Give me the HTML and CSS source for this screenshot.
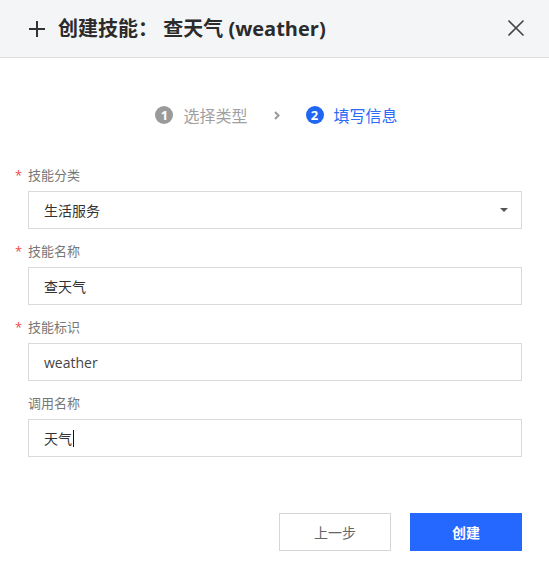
FILE: index.html
```html
<!DOCTYPE html>
<html lang="zh">
<head>
<meta charset="utf-8">
<title>创建技能</title>
<link rel="stylesheet" href="styles.css">
</head>
<body>
<div class="dialog">
  <header class="head">
    <div class="title">
      <svg class="plus" width="18" height="18" viewBox="0 0 18 18"><path d="M9 1v16M1 9h16" stroke="#333" stroke-width="2" fill="none"/></svg>
      <span class="title-text">创建技能： 查天气 (weather)</span>
    </div>
    <svg class="close" width="18" height="18" viewBox="0 0 18 18"><path d="M1.5 1.5l15 15M16.5 1.5l-15 15" stroke="#444" stroke-width="1.6" fill="none"/></svg>
  </header>

  <div class="steps">
    <div class="step done"><span class="num">1</span><span class="step-label">选择类型</span></div>
    <svg class="chev" width="6" height="9" viewBox="0 0 6 9"><path d="M1 1l3.5 3.5L1 8" stroke="#999" stroke-width="2" fill="none"/></svg>
    <div class="step active"><span class="num">2</span><span class="step-label">填写信息</span></div>
  </div>

  <form class="form">
    <div class="field">
      <label class="label"><span class="req">*</span>技能分类</label>
      <div class="box select"><span>生活服务</span><span class="caret"></span></div>
    </div>
    <div class="field">
      <label class="label"><span class="req">*</span>技能名称</label>
      <div class="box"><span>查天气</span></div>
    </div>
    <div class="field">
      <label class="label"><span class="req">*</span>技能标识</label>
      <div class="box"><span class="latin">weather</span></div>
    </div>
    <div class="field">
      <label class="label">调用名称</label>
      <div class="box"><span>天气</span><span class="cursor"></span></div>
    </div>
  </form>

  <div class="actions">
    <button class="btn btn-default" type="button">上一步</button>
    <button class="btn btn-primary" type="button">创建</button>
  </div>
</div>
</body>
</html>
```

FILE: styles.css
```css
* { box-sizing: border-box; }
html, body { margin: 0; padding: 0; background: #fff; }
body {
  font-family: "Open Sans", "Noto Sans CJK SC", sans-serif;
  color: #333;
  width: 549px;
  height: 574px;
  overflow: hidden;
}
.dialog { display: flex; flex-direction: column; }
.head {
  height: 58px;
  background: #f4f5f7;
  border-bottom: 1px solid #dcdde0;
  display: flex;
  align-items: center;
  justify-content: space-between;
  padding: 0 24px 0 28px;
}
.title { display: flex; align-items: center; }
.plus { margin-right: 12px; margin-top: 1px; }
.title-text {
  font-size: 20px;
  font-weight: 700;
  color: #2b2b2b;
  line-height: 28px;
  margin-top: 1px;
}
.close { margin-top: -2px; }

.steps {
  margin-top: 45px;
  height: 24px;
  display: flex;
  align-items: center;
  justify-content: center;
  padding-left: 4px;
}
.step { display: flex; align-items: center; }
.num {
  width: 18px;
  height: 18px;
  border-radius: 50%;
  display: flex;
  align-items: center;
  justify-content: center;
  color: #fff;
  font-size: 13px;
  font-weight: 700;
  font-family: "Open Sans", sans-serif;
  margin-right: 10px;
}
.step-label { font-size: 16px; line-height: 24px; font-family: "Noto Sans CJK SC", sans-serif; }
.done .num { background: #9a9a9a; }
.done .step-label { color: #a0a0a0; }
.active .num { background: #1f66f2; }
.active .step-label { color: #2a6cf6; }
.chev { margin: 0 26px; }

.form {
  margin: 38px 27px 0 28px;
  display: flex;
  flex-direction: column;
  gap: 12px;
}
.field { display: flex; flex-direction: column; }
.label {
  font-size: 13px;
  line-height: 20px;
  color: #777;
  margin-bottom: 6px;
  font-family: "Noto Sans CJK SC", sans-serif;
}
.req {
  display: inline-block;
  width: 13px;
  margin-left: -13px;
  color: #f04848;
  font-size: 13px;
  font-family: "Open Sans", sans-serif;
}
.box {
  height: 38px;
  border: 1px solid #dadada;
  background: #fff;
  display: flex;
  align-items: center;
  padding: 0 15px;
  font-size: 14px;
  color: #333;
  font-family: "Noto Sans CJK SC", sans-serif;
}
.box .latin { font-family: "Open Sans", sans-serif; font-size: 14px; color: #444; }
.select { justify-content: space-between; padding-right: 13px; }
.caret {
  width: 0; height: 0;
  border-left: 4px solid transparent;
  border-right: 4px solid transparent;
  border-top: 4px solid #555;
}
.cursor {
  width: 1px;
  height: 17px;
  background: #111;
  margin-left: 1px;
}

.actions {
  margin: 56px 27px 0 0;
  display: flex;
  justify-content: flex-end;
  gap: 19px;
}
.btn {
  width: 112px;
  height: 38px;
  font-size: 14px;
  font-family: "Noto Sans CJK SC", sans-serif;
  border-radius: 0;
  cursor: pointer;
  padding: 0;
}
.btn-default { background: #fff; border: 1px solid #d6d6d6; color: #666; }
.btn-primary { background: #2468ff; border: 1px solid #2468ff; color: #fff; font-weight: 700; }
```
